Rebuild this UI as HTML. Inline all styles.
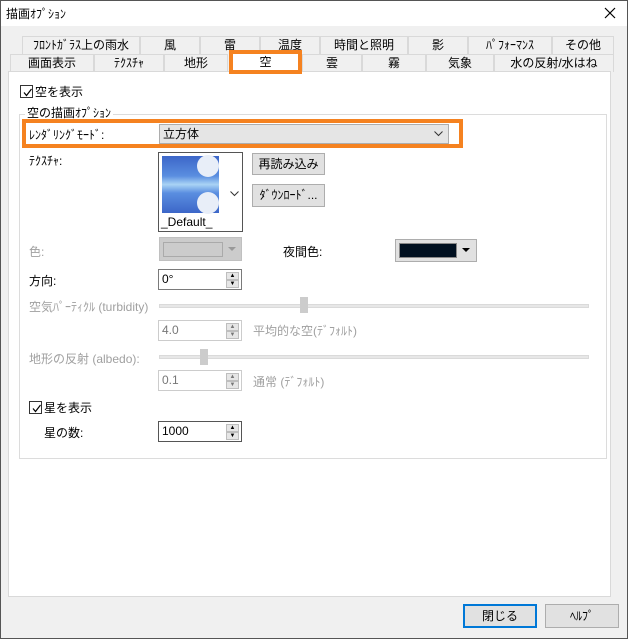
<!DOCTYPE html>
<html><head><meta charset="utf-8"><style>
*{box-sizing:border-box;margin:0;padding:0}
body{width:628px;height:639px;background:#f0f0f0;font-family:"Liberation Sans","Noto Sans CJK JP",sans-serif;font-size:12px;color:#000;position:relative;overflow:hidden}
.a{position:absolute;white-space:nowrap}
.frame{position:absolute;left:0;top:0;width:628px;height:639px;border:1px solid #555}
.tab{position:absolute;height:18px;border:1px solid #d9d9d9;border-bottom:none;background:#f0f0f0;text-align:center;line-height:17px}
.dis{color:#a0a0a0}
.spin{position:absolute;width:84px;height:21px;border:1px solid #7a7a7a;background:#fff;padding-left:3px;line-height:19px}
.spin.d{border-color:#ccc;color:#777}
.arr{position:absolute;right:2px;width:13px;height:8px;background:#e6e6e6;border:1px solid #adadadb0;font-size:6px;line-height:6px;text-align:center}
.btn{position:absolute;background:#e1e1e1;border:1px solid #adadad;text-align:center;line-height:20px}
.cb{position:absolute;width:13px;height:13px;border:1px solid #333;background:#fff}
.cb svg{position:absolute;left:1px;top:1px}
</style></head><body>
<div class="frame"></div>
<div class="a" style="left:1px;top:1px;width:626px;height:25px;background:#fff"></div>
<div class="a" style="left:6px;top:5px">描画ｵﾌﾟｼｮﾝ</div>
<svg class="a" style="left:604px;top:7px" width="12" height="12"><path d="M1 1L11 11M11 1L1 11" stroke="#000" stroke-width="1.2"/></svg>

<div class="tab" style="left:22px;top:36px;width:118px">ﾌﾛﾝﾄｶﾞﾗｽ上の雨水</div>
<div class="tab" style="left:140px;top:36px;width:60px">風</div>
<div class="tab" style="left:200px;top:36px;width:60px">雷</div>
<div class="tab" style="left:260px;top:36px;width:60px">温度</div>
<div class="tab" style="left:320px;top:36px;width:88px">時間と照明</div>
<div class="tab" style="left:408px;top:36px;width:60px">影</div>
<div class="tab" style="left:468px;top:36px;width:84px">ﾊﾟﾌｫｰﾏﾝｽ</div>
<div class="tab" style="left:552px;top:36px;width:62px">その他</div>

<div class="tab" style="left:10px;top:54px;width:84px">画面表示</div>
<div class="tab" style="left:94px;top:54px;width:70px">ﾃｸｽﾁｬ</div>
<div class="tab" style="left:164px;top:54px;width:64px">地形</div>
<div class="tab" style="left:302px;top:54px;width:60px">雲</div>
<div class="tab" style="left:362px;top:54px;width:64px">霧</div>
<div class="tab" style="left:426px;top:54px;width:68px">気象</div>
<div class="tab" style="left:494px;top:54px;width:120px">水の反射/水はね</div>

<div class="a" style="left:8px;top:71px;width:603px;height:526px;background:#fff;border:1px solid #d9d9d9"></div>
<div class="a" style="left:229px;top:50px;width:73px;height:24px;background:#fff;border:4px solid #f58220;text-align:center;line-height:16px">空</div>

<div class="cb" style="left:20px;top:85px"><svg width="11" height="11"><path d="M2 5.5L4.5 8.5L9.5 2" stroke="#000" fill="none" stroke-width="1.2"/></svg></div>
<div class="a" style="left:35px;top:83px">空を表示</div>

<div class="a" style="left:19px;top:114px;width:588px;height:345px;border:1px solid #dcdcdc"></div>
<div class="a" style="left:25px;top:104px;background:#fff;padding:0 2px">空の描画ｵﾌﾟｼｮﾝ</div>

<div class="a" style="left:22px;top:119px;width:441px;height:29px;border:4px solid #f58220"></div>
<div class="a" style="left:29px;top:126px">ﾚﾝﾀﾞﾘﾝｸﾞﾓｰﾄﾞ:</div>
<div class="a" style="left:159px;top:124px;width:290px;height:20px;background:#e5e5e5;border:1px solid #adadad;padding-left:3px;line-height:18px">立方体</div>
<svg class="a" style="left:434px;top:131px" width="9" height="6"><path d="M0.5 0.5L4.5 4.5L8.5 0.5" stroke="#333" fill="none"/></svg>

<div class="a" style="left:29px;top:152px">ﾃｸｽﾁｬ:</div>
<div class="a" style="left:158px;top:152px;width:85px;height:80px;border:1px solid #555;background:#fff"></div>
<div class="a" style="left:162px;top:156px;width:57px;height:57px;background:linear-gradient(180deg,#3c66c8 0%,#5a8ee0 35%,#a9d3f5 50%,#5a8ee0 65%,#3c66c8 100%)"></div>
<div class="a" style="left:197px;top:155px;width:22px;height:22px;border-radius:50%;background:#e8eef8"></div>
<div class="a" style="left:197px;top:192px;width:22px;height:22px;border-radius:50%;background:#e8eef8"></div>
<div class="a" style="left:161px;top:215px">_Default_</div>
<svg class="a" style="left:230px;top:191px" width="9" height="6"><path d="M0.5 0.5L4.5 4.5L8.5 0.5" stroke="#333" fill="none"/></svg>
<div class="btn" style="left:252px;top:153px;width:73px;height:22px">再読み込み</div>
<div class="btn" style="left:252px;top:184px;width:73px;height:23px">ﾀﾞｳﾝﾛｰﾄﾞ...</div>

<div class="a dis" style="left:29px;top:243px">色:</div>
<div class="a" style="left:159px;top:237px;width:83px;height:24px;background:#ccc;border:1px solid #c0c0c0"></div>
<div class="a" style="left:163px;top:242px;width:60px;height:15px;border:1px solid #aaa;background:#ccc"></div>
<svg class="a" style="left:228px;top:247px" width="8" height="5"><path d="M0 0H8L4 4Z" fill="#999"/></svg>
<div class="a" style="left:283px;top:243px">夜間色:</div>
<div class="a" style="left:395px;top:239px;width:82px;height:23px;background:#e1e1e1;border:1px solid #adadad"></div>
<div class="a" style="left:399px;top:243px;width:58px;height:15px;background:#001020;border:1px solid #888"></div>
<svg class="a" style="left:462px;top:248px" width="8" height="5"><path d="M0 0H8L4 4Z" fill="#000"/></svg>

<div class="a" style="left:29px;top:272px">方向:</div>
<div class="spin" style="left:158px;top:269px">0°<div class="arr" style="top:2px">▲</div><div class="arr" style="top:10px">▼</div></div>

<div class="a dis" style="left:29px;top:298px">空気ﾊﾟｰﾃｨｸﾙ (turbidity)</div>
<div class="a" style="left:159px;top:304px;width:430px;height:4px;background:#e7e7e7;border:1px solid #dadada"></div>
<div class="a" style="left:300px;top:297px;width:8px;height:16px;background:#ccc"></div>
<div class="spin d" style="left:158px;top:320px">4.0<div class="arr" style="top:2px">▲</div><div class="arr" style="top:10px">▼</div></div>
<div class="a dis" style="left:253px;top:322px">平均的な空(ﾃﾞﾌｫﾙﾄ)</div>

<div class="a dis" style="left:29px;top:350px">地形の反射 (albedo):</div>
<div class="a" style="left:159px;top:355px;width:430px;height:4px;background:#e7e7e7;border:1px solid #dadada"></div>
<div class="a" style="left:200px;top:349px;width:8px;height:16px;background:#ccc"></div>
<div class="spin d" style="left:158px;top:370px">0.1<div class="arr" style="top:2px">▲</div><div class="arr" style="top:10px">▼</div></div>
<div class="a dis" style="left:253px;top:373px">通常 (ﾃﾞﾌｫﾙﾄ)</div>

<div class="cb" style="left:29px;top:401px"><svg width="11" height="11"><path d="M2 5.5L4.5 8.5L9.5 2" stroke="#000" fill="none" stroke-width="1.2"/></svg></div>
<div class="a" style="left:44px;top:399px">星を表示</div>
<div class="a" style="left:44px;top:424px">星の数:</div>
<div class="spin" style="left:158px;top:421px;border-color:#555">1000<div class="arr" style="top:2px">▲</div><div class="arr" style="top:10px">▼</div></div>

<div class="btn" style="left:463px;top:604px;width:74px;height:24px;border:2px solid #0078d7;line-height:20px">閉じる</div>
<div class="btn" style="left:545px;top:604px;width:74px;height:24px;line-height:22px">ﾍﾙﾌﾟ</div>
</body></html>
